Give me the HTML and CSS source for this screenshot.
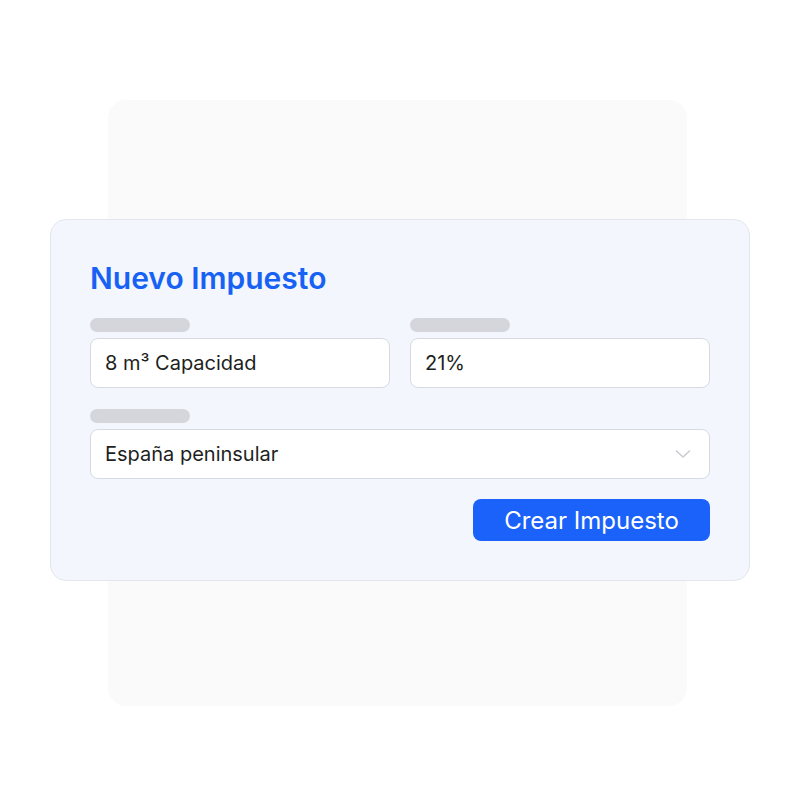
FILE: index.html
```html
<!DOCTYPE html>
<html lang="es">
<head>
    <meta charset="UTF-8">
    <meta name="viewport" content="width=device-width, initial-scale=1.0">
    <title>Nuevo Impuesto</title>
    <link rel="stylesheet" href="styles.css">
</head>
<body>
    <div class="stage">
        <div class="back-card"></div>

        <form class="tax-card" onsubmit="return false;">
            <h1 class="title">Nuevo Impuesto</h1>

            <div class="row">
                <div class="field">
                    <span class="label-bar"></span>
                    <div class="input">8 m³ Capacidad</div>
                </div>
                <div class="field">
                    <span class="label-bar"></span>
                    <div class="input">21%</div>
                </div>
            </div>

            <div class="field">
                <span class="label-bar"></span>
                <div class="input select">
                    <span>España peninsular</span>
                    <svg class="chevron" width="16" height="10" viewBox="0 0 16 10" fill="none">
                        <path d="M1.5 2l6.5 6 6.5-6" stroke="#c9cbd1" stroke-width="1.5" stroke-linecap="round" stroke-linejoin="round"/>
                    </svg>
                </div>
            </div>

            <div class="actions">
                <button class="btn" type="submit">Crear Impuesto</button>
            </div>
        </form>
    </div>
</body>
</html>
```

FILE: styles.css
```css
* {
    margin: 0;
    padding: 0;
    box-sizing: border-box;
}

body {
    font-family: Inter, 'Noto Sans', sans-serif;
    background: #ffffff;
    color: #1e1f22;
}

.stage {
    width: 800px;
    height: 800px;
    display: grid;
}

.back-card,
.tax-card {
    grid-area: 1 / 1;
    align-self: start;
    justify-self: start;
}

.back-card {
    width: 579px;
    height: 606px;
    margin: 100px 0 0 108px;
    background: #fafafa;
    border-radius: 18px;
}

.tax-card {
    width: 700px;
    margin: 219px 0 0 50px;
    padding: 39px;
    background: #f3f6fd;
    border: 1px solid #e3e6ee;
    border-radius: 16px;
    display: flex;
    flex-direction: column;
    gap: 21px;
}

.title {
    font-size: 30px;
    font-weight: 600;
    color: #1762f4;
    line-height: 38px;
}

.row {
    display: grid;
    grid-template-columns: 1fr 1fr;
    gap: 20px;
}

.field {
    display: flex;
    flex-direction: column;
    gap: 6px;
}

.label-bar {
    display: block;
    width: 100px;
    height: 14px;
    border-radius: 7px;
    background: #d4d6db;
}

.input {
    height: 50px;
    padding: 0 14px;
    background: #ffffff;
    border: 1px solid #d6dae3;
    border-radius: 8px;
    font-size: 20px;
    display: flex;
    align-items: center;
}

.select {
    justify-content: space-between;
    padding-right: 18px;
}

.actions {
    display: flex;
    justify-content: flex-end;
    margin-top: -1px;
}

.btn {
    width: 237px;
    height: 42px;
    border: none;
    border-radius: 8px;
    background: #1a62fa;
    color: #ffffff;
    font-family: inherit;
    font-size: 24px;
    font-weight: 400;
    cursor: pointer;
}
```
